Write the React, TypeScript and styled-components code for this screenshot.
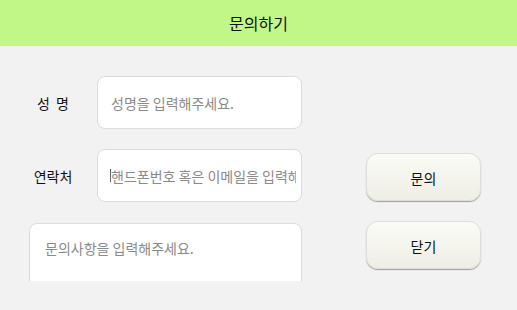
import React from "react";
import styled, { createGlobalStyle } from "styled-components";

const GlobalStyle = createGlobalStyle`
  html, body {
    margin: 0;
    padding: 0;
    background: #f2f2f2;
    font-family: "Noto Sans CJK KR", "Noto Sans", sans-serif;
  }
  * { box-sizing: border-box; }
`;

const Page = styled.div`
  width: 517px;
  height: 310px;
  background: #f2f2f2;
  overflow: hidden;
`;

const Header = styled.header`
  height: 46px;
  background: #c1f786;
  display: flex;
  align-items: center;
  justify-content: center;
`;

const Title = styled.h1`
  margin: 0;
  font-size: 16px;
  font-weight: 400;
  color: #111;
  line-height: 1;
`;

const Content = styled.main`
  display: flex;
  align-items: flex-start;
  height: 235px;
  overflow: hidden;
  padding: 30px 0 0 29px;
`;

const Form = styled.form`
  width: 273px;
  display: flex;
  flex-direction: column;
  gap: 20px;
`;

const Row = styled.div`
  display: flex;
  align-items: center;
`;

const Label = styled.label<{ $spread?: boolean }>`
  width: 68px;
  padding-right: 20px;
  text-align: center;
  font-size: 14px;
  color: #111;
  word-spacing: ${(p) => (p.$spread ? "3px" : "0")};
`;

const FieldWrap = styled.div`
  position: relative;
  display: flex;
`;

const Caret = styled.span`
  position: absolute;
  left: 13px;
  top: 20px;
  width: 1px;
  height: 13px;
  background: #666;
`;

const Field = styled.input`
  width: 205px;
  height: 53px;
  border: 1px solid #dcdcdc;
  border-radius: 8px;
  background: #fff;
  padding: 0 5px 0 13px;
  font-family: inherit;
  font-size: 14px;
  color: #222;
  outline: none;
  &::placeholder { color: #8a8a8a; }
`;

const Message = styled.textarea`
  width: 273px;
  height: 100px;
  margin-top: 1px;
  border: 1px solid #dcdcdc;
  border-radius: 8px;
  background: #fff;
  padding: 14px 15px;
  font-family: inherit;
  font-size: 14px;
  line-height: 1.5;
  resize: none;
  outline: none;
  &::placeholder { color: #8a8a8a; }
`;

const Actions = styled.div`
  margin-left: 64px;
  padding-top: 77px;
  display: flex;
  flex-direction: column;
  gap: 20px;
`;

const Button = styled.button`
  width: 115px;
  height: 48px;
  padding: 2px 0 0;
  border: 1px solid #dedede;
  border-radius: 12px;
  background: linear-gradient(#fbfbf7, #eeeee5);
  box-shadow: 0 1px 1px rgba(0, 0, 0, 0.35);
  font-family: inherit;
  font-size: 14px;
  color: #111;
  cursor: pointer;
`;

export default function App() {
  return (
    <Page>
      <GlobalStyle />
      <Header>
        <Title>문의하기</Title>
      </Header>
      <Content>
        <Form onSubmit={(e) => e.preventDefault()}>
          <Row>
            <Label $spread>성 명</Label>
            <Field placeholder="성명을 입력해주세요." />
          </Row>
          <Row>
            <Label>연락처</Label>
            <FieldWrap>
              <Field placeholder="핸드폰번호 혹은 이메일을 입력해주세요." />
              <Caret />
            </FieldWrap>
          </Row>
          <Message placeholder="문의사항을 입력해주세요." />
        </Form>
        <Actions>
          <Button type="button">문의</Button>
          <Button type="button">닫기</Button>
        </Actions>
      </Content>
    </Page>
  );
}
